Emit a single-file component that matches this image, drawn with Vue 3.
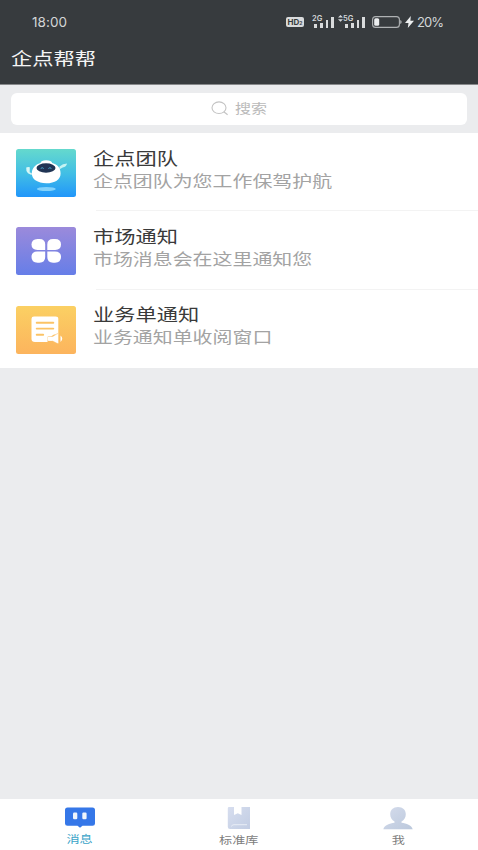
<script setup>
const items = [
  { id: 'team', title: '企点团队', text: '企点团队为您工作保驾护航' },
  { id: 'market', title: '市场通知', text: '市场消息会在这里通知您' },
  { id: 'order', title: '业务单通知', text: '业务通知单收阅窗口' },
]
const tabs = [
  { id: 'msg', label: '消息' },
  { id: 'lib', label: '标准库' },
  { id: 'me', label: '我' },
]
</script>

<template>
  <div class="screen">
    <header class="top">
      <div class="status">
        <span class="time">18:00</span>
        <div class="indicators">
          <span class="hd">HD<small>2</small></span>
          <span class="signal first"><b>2G</b><i></i><i></i><i></i><i></i></span>
          <svg class="arrows" width="5" height="7" viewBox="0 0 5 7" fill="#d5d8da"><path d="M0 2.6 2.5 0 5 2.6zM0 4.2h5L2.5 6.8z" /></svg>
          <span class="signal"><b>5G</b><i></i><i></i><i></i><i></i></span>
          <svg class="battery" width="30" height="12" viewBox="0 0 30 12">
            <rect x=".6" y=".6" width="26.8" height="10.8" rx="3" fill="none" stroke="#aeb1b3" stroke-width="1.1" />
            <rect x="2.2" y="2.2" width="5" height="7.6" rx="1.5" fill="#eceeef" />
            <path d="M28.2 4q1.5.3 1.5 2t-1.5 2z" fill="#aeb1b3" />
          </svg>
          <svg class="bolt" width="9" height="12" viewBox="0 0 9 12"><path d="M5.8 0 0 7h3.5L2.8 12 9 4.8H5.4z" fill="#eceeef" /></svg>
          <span class="percent">20%</span>
        </div>
      </div>
      <h1 class="wide">企点帮帮</h1>
    </header>

    <div class="search-area">
      <div class="search">
        <svg width="18" height="15" viewBox="0 0 18 15" fill="none" stroke="#c3c3c3" stroke-width="1.1"><ellipse cx="8" cy="6.7" rx="7" ry="5.8" /><path d="m12.8 10.8 3.8 3" /></svg>
        <span class="wide">搜索</span>
      </div>
    </div>

    <main class="list">
      <div v-for="item in items" :key="item.id" class="row">
        <svg v-if="item.id === 'team'" class="icon" width="60" height="48" viewBox="0 0 60 48">
          <defs><linearGradient id="gTeam" x1="0" y1="0" x2="0" y2="1"><stop stop-color="#65d9cd" /><stop offset=".5" stop-color="#42bfe5" /><stop offset="1" stop-color="#2196fa" /></linearGradient></defs>
          <rect width="60" height="48" rx="2.5" fill="url(#gTeam)" />
          <ellipse cx="30.3" cy="40" rx="9.5" ry="2.1" fill="#83d2fb" />
          <path d="M10.2 18.5q1.8-1 3.6-.2l-.1 4.9 2.3 1.3-.5 1.5-3.5-1.7q-2.200-1.800-1.800-5.800z" fill="#d7f7f6" />
          <path d="M43.500 17.500q3.200-3 7.600-3-.8 3.400-4.400 4.100l-3.500 2z" fill="#c5f3f2" />
          <path d="M24.500 14q.5-2.800 5.700-2.800t6 2.800c5.500 1.500 8.400 5.200 8.400 10.400 0 6-5.600 9.800-14.300 9.800S15.800 30.500 15.800 24.600c0-5.100 3.200-9 8.700-10.600z" fill="#fff" />
          <ellipse cx="30" cy="19" rx="9.500" ry="4.700" fill="#203454" />
          <path d="M24.700 19.500q1.500-1.600 3 0m4.700 0q1.500-1.600 3 0" stroke="#49a9cf" stroke-width="1" fill="none" />
        </svg>
        <svg v-else-if="item.id === 'market'" class="icon" width="60" height="48" viewBox="0 0 60 48">
          <defs><linearGradient id="gMarket" x1="0" y1="0" x2="0" y2="1"><stop stop-color="#9b8adb" /><stop offset="1" stop-color="#667ee8" /></linearGradient></defs>
          <rect width="60" height="48" rx="2.5" fill="url(#gMarket)" />
          <g fill="#fff">
            <path d="M21.500 12h2q5.700 0 5.700 5.500v5.400h-7.700q-6 0-6-5.400t6-5.500z" />
            <path d="M37 12h2q6 0 6 5.500t-6 5.400h-7.700v-5.400q0-5.500 5.700-5.500z" />
            <path d="M21.500 24.500h7.700V30q0 5.700-5.700 5.700h-2q-6 0-6-5.700t6-5.500z" />
            <path d="M31.300 24.500H39q6 0 6 5.500t-6 5.700h-2q-5.700 0-5.700-5.700z" />
          </g>
        </svg>
        <svg v-else class="icon" width="60" height="48" viewBox="0 0 60 48">
          <defs><linearGradient id="gOrder" x1="0" y1="0" x2="0" y2="1"><stop stop-color="#fbd063" /><stop offset="1" stop-color="#fcb45d" /></linearGradient></defs>
          <rect width="60" height="48" rx="2.5" fill="url(#gOrder)" />
          <path d="M18 10.500h21.500q2.800 0 2.800 2.300v15.700H38l-3.500 2.200h-3V36H19q-3.500 0-3.500-3V12.800q0-2.300 2.500-2.300z" fill="#fff" />
          <path d="M20.700 16.800h16.600M20.700 22.600h16.600M20.700 28.800h6.500" stroke="#fbc365" stroke-width="1.9" stroke-linecap="round" />
          <path d="M33 30.500h3.700l4.300-2.700q1.600-.7 1.600.8v8.200q0 1.300-1.600.5L36.500 35H33q-1.200 0-1.200-1v-2.400q0-1.100 1.200-1.100z" fill="#fff" stroke="#fbbd61" stroke-width=".5" />
          <path d="M31.500 30.900h5v3.700h-5z" fill="#fff" />
          <path d="M44.500 29.500q3.500 3.200 0 6.400z" fill="#fff" />
        </svg>
        <div class="copy">
          <span class="title wide">{{ item.title }}</span>
          <span class="desc wide">{{ item.text }}</span>
        </div>
      </div>
    </main>

    <nav class="tabs">
      <div v-for="tab in tabs" :key="tab.id" class="tab" :class="tab.id">
        <svg v-if="tab.id === 'msg'" width="30" height="24" viewBox="0 0 30 24">
          <path d="M2.500 1.500h25Q30 1.500 30 4v13.500q0 2.300-2.500 2.300H17.500L15 21.800l-2.500-2h-10Q0 19.800 0 17.500V4q0-2.500 2.500-2.500z" fill="#3577e8" />
          <rect x="8" y="6.500" width="4.300" height="6.800" rx="1.200" fill="#f0f6fc" />
          <rect x="17.300" y="6.500" width="4.300" height="6.800" rx="1.200" fill="#f0f6fc" />
        </svg>
        <svg v-else-if="tab.id === 'lib'" width="24" height="24" viewBox="0 0 24 24">
          <defs><linearGradient id="gLib" x1="0" y1="0" x2="1" y2="1"><stop stop-color="#d7deef" /><stop offset="1" stop-color="#c2cde3" /></linearGradient></defs>
          <path d="M2 1h5v8l3.800-1.800L14.500 9V1H23v22H3q-2.200 0-2.200-2V2.200Q.8 1 2 1z" fill="url(#gLib)" />
          <path d="M4.500 20.500q.2-1.800 2.500-1.800h13" fill="none" stroke="#e8edf6" stroke-width="1" />
        </svg>
        <svg v-else width="30" height="24" viewBox="0 0 30 24">
          <defs><linearGradient id="gMe" x1="0" y1="0" x2="1" y2="1"><stop stop-color="#d5dcec" /><stop offset="1" stop-color="#bbc8dc" /></linearGradient></defs>
          <path d="M15 1c4.800 0 7.800 3 7.800 7.300 0 3.200-1.600 6-4.300 7.300v1.200c5 .8 10 2.500 11.200 6.400H.3c1.200-3.900 6.200-5.600 11.200-6.400v-1.200c-2.700-1.300-4.300-4.100-4.300-7.300C7.200 4 10.200 1 15 1z" fill="url(#gMe)" />
        </svg>
        <span class="wide">{{ tab.label }}</span>
      </div>
    </nav>
  </div>
</template>

<style>
body { margin: 0; }
</style>

<style scoped>
.screen {
  height: 850px;
  display: flex;
  flex-direction: column;
  overflow: hidden;
  background: #ebecee;
  font-family: "Noto Sans CJK SC", sans-serif;
}
.wide { display: inline-block; transform: scaleX(1.25); transform-origin: left center; white-space: nowrap; }
.top { height: 85px; flex: none; background: #373b3e; color: #f5f5f5; border-bottom: 1px solid #87898b; box-sizing: border-box; }
.status { height: 43px; display: flex; justify-content: space-between; padding: 0 35px 0 32px; box-sizing: border-box; align-items: center; font-family: Inter, sans-serif; color: #d3d6d7; }
.time { font-size: 13.5px; letter-spacing: .05px; }
.indicators { display: flex; align-items: center; }
.hd { display: flex; align-items: center; justify-content: center; width: 18px; height: 10px; border-radius: 2px; background: #d9dbdc; color: #373b3e; font-size: 8px; font-weight: 700; line-height: 10px; }
.hd small { font-size: 5px; align-self: flex-end; line-height: 7px; }
.signal { position: relative; display: flex; align-items: flex-end; gap: 3px; height: 12px; width: 20px; }
.signal.first { margin-left: 10px; }
.signal b { position: absolute; left: -2px; top: -1px; font-size: 7.5px; line-height: 7px; font-weight: 600; }
.signal i { width: 3px; background: #d9dbdc; height: 4px; }
.signal i:nth-of-type(2) { height: 5px; }
.signal i:nth-of-type(3) { height: 8px; }
.signal i:nth-of-type(4) { height: 11px; }
.arrows { margin: -6px 2px 0 4px; }
.battery { margin-left: 7px; }
.bolt { margin: 0 3px 0 3px; }
.percent { font-size: 13px; letter-spacing: -.9px; width: 26px; }
h1 { margin: 3px 0 0 10.5px; font-size: 17px; line-height: 23px; font-weight: 400; }
.search-area { height: 48px; flex: none; padding: 8px 11px; box-sizing: border-box; }
.search { height: 32px; border-radius: 6px; background: #fff; display: flex; align-items: center; padding: 0 0 2px 200px; box-sizing: border-box; gap: 6px; color: #bababa; font-size: 12.8px; line-height: 20px; }
.list { background: #fff; height: 235px; flex: none; display: grid; grid-template-rows: repeat(3, 1fr); }
.row { display: flex; padding-left: 16px; gap: 20px; }
.icon { margin-top: 16px; flex: none; }
.copy { flex: 1; display: flex; flex-direction: column; align-items: flex-start; padding-top: 12.5px; border-bottom: 1px solid #f3f3f3; }
.row:last-child .copy { border-bottom: 0; }
.copy .wide { margin-left: -3px; }
.title { font-size: 17px; line-height: 24px; color: #3a3a3a; }
.desc { font-size: 15.95px; line-height: 20px; color: #a3a3a3; }
.tabs { margin-top: auto; height: 51px; flex: none; background: #fff; display: grid; grid-template-columns: repeat(3, 1fr); }
.tab { display: flex; flex-direction: column; align-items: center; padding-top: 7px; color: #7d7d7d; font-size: 10.5px; line-height: 16px; }
.tab svg { flex: none; }
.tab .wide { transform-origin: center; margin-top: 2px; }
.msg .wide { color: #3ba4c8; margin-top: 1px; }
</style>
